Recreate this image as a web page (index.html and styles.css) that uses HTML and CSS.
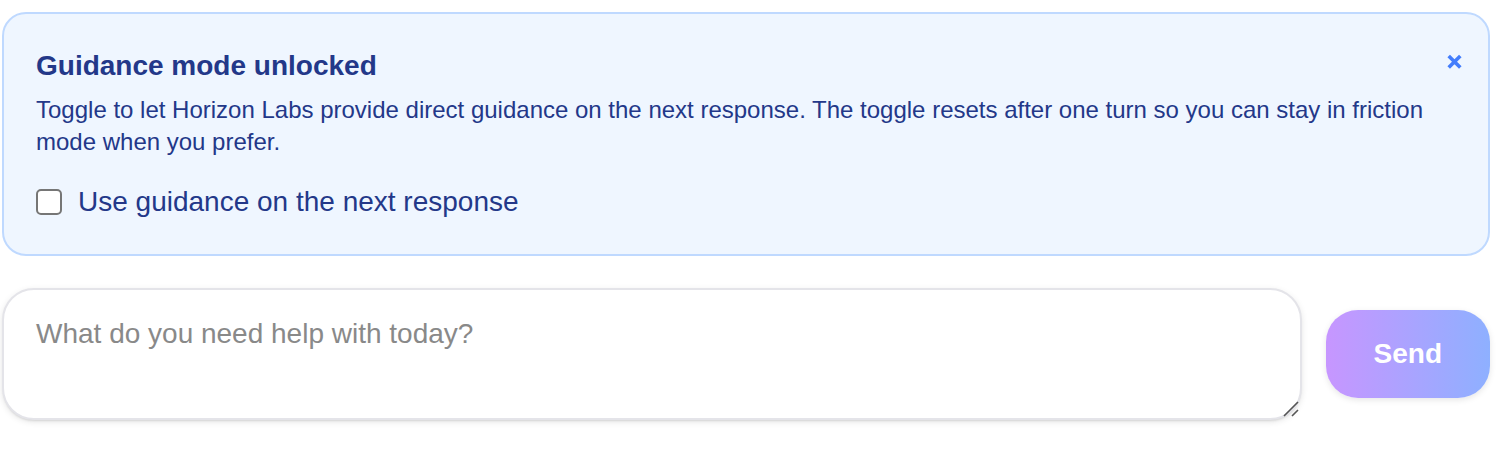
FILE: index.html
```html
<!DOCTYPE html>
<html lang="en">
<head>
<meta charset="utf-8">
<title>Horizon Labs</title>
<link rel="stylesheet" href="styles.css">
</head>
<body>
<main class="page">
  <section class="notice">
    <div class="notice-header">
      <div class="notice-copy">
        <h2 class="notice-title">Guidance mode unlocked</h2>
        <p class="notice-text">Toggle to let Horizon Labs provide direct guidance on the next response. The toggle resets after one turn so you can stay in friction mode when you prefer.</p>
      </div>
      <button class="dismiss" type="button" aria-label="Dismiss"><svg class="dismiss-icon" viewBox="0 0 20 20" aria-hidden="true"><path d="M4.7 4 16.3 15.6M16.3 4 4.7 15.6"/></svg></button>
    </div>
    <label class="option"><input class="option-box" type="checkbox">Use guidance on the next response</label>
  </section>
  <form class="composer">
    <div class="field">
      <textarea class="message" aria-label="Message" placeholder="What do you need help with today?"></textarea>
      <svg class="grip" viewBox="0 0 16 16" aria-hidden="true"><path d="M1 15 15 1M9 15l6-6"/></svg>
    </div>
    <button class="send" type="button">Send</button>
  </form>
</main>
</body>
</html>
```
FILE: styles.css
```css
* { box-sizing: border-box; }
body { margin: 0; background: #fff; font-family: "Liberation Sans", Arial, sans-serif; }
.page { padding: 12px 16px 32px 2px; display: flex; flex-direction: column; gap: 32px; }
.notice { border: 2px solid #bfd9ff; border-radius: 24px; background: #eff6ff; color: #233889; padding: 32px 24px 32px 32px; display: flex; flex-direction: column; gap: 24px; }
.notice-header { display: flex; align-items: flex-start; justify-content: space-between; gap: 16px; }
.notice-title { margin: 0 0 8px; font-size: 28px; line-height: 40px; font-weight: 700; }
.notice-text { margin: 0; font-size: 24px; line-height: 32px; }
.dismiss { display: flex; align-items: center; height: 32px; border: 0; padding: 0; background: none; color: #437dfc; }
.dismiss-icon { width: 20px; height: 20px; fill: none; stroke: currentColor; stroke-width: 3.6; }
.option { display: flex; align-items: center; gap: 16px; font-size: 28px; line-height: 40px; }
.option-box { appearance: none; width: 26px; height: 26px; margin: 0; border: 2px solid #767676; border-radius: 5px; background: #fff; }
.option-box:checked { background: #155dfc; }
.composer { display: flex; align-items: center; gap: 24px; }
.field { position: relative; flex: 1; display: flex; }
.message { flex: 1; height: 132px; resize: none; border: 2px solid #e4e4e9; border-radius: 32px; padding: 24px 32px; background: #fff; font: 28px/40px "Liberation Sans", Arial, sans-serif; box-shadow: 0 2px 6px rgba(0, 0, 0, .1), 0 2px 2px -1px rgba(0, 0, 0, .1); }
.message::placeholder { color: #898989; }
.grip { position: absolute; right: 3px; bottom: 3px; width: 16px; height: 16px; fill: none; stroke: #555; stroke-width: 1.6; }
.send { border: 0; border-radius: 32px; padding: 24px 48px; background: linear-gradient(90deg, #c796ff, #8eb0ff); color: #fff; font: 700 28px/40px "Liberation Sans", Arial, sans-serif; box-shadow: 0 2px 6px rgba(0, 0, 0, .1); }
```
